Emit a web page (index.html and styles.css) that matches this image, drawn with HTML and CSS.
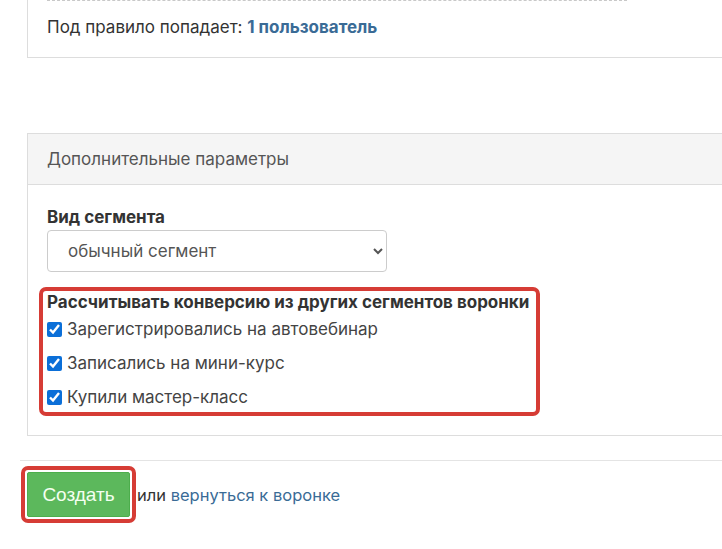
FILE: index.html
```
<!DOCTYPE html>
<html lang="ru">
<head>
<meta charset="utf-8">
<link rel="stylesheet" href="styles.css">
</head>
<body>
<div class="page">
  <div class="panel panel-top">
    <div class="dashed"></div>
    <p class="count">Под правило попадает: <a class="count-link" href="#">1 пользователь</a></p>
  </div>

  <div class="panel panel-extra">
    <div class="panel-heading">Дополнительные параметры</div>
    <div class="panel-body">
      <label class="field-label" for="kind">Вид сегмента</label>
      <select id="kind" class="select">
        <option>обычный сегмент</option>
      </select>
      <div class="highlight">
        <div class="group-title">Рассчитывать конверсию из других сегментов воронки</div>
        <label class="check"><input type="checkbox" checked> Зарегистрировались на автовебинар</label>
        <label class="check"><input type="checkbox" checked> Записались на мини-курс</label>
        <label class="check"><input type="checkbox" checked> Купили мастер-класс</label>
      </div>
    </div>
  </div>

  <div class="actions">
    <span class="btn-ring"><button class="btn-create" type="button">Создать</button></span>
    <span class="or">или <a class="back-link" href="#">вернуться к воронке</a></span>
  </div>
</div>
</body>
</html>
```
FILE: styles.css
```
html, body {
  margin: 0;
  padding: 0;
  background: #fff;
}
body {
  font-family: Inter, "Noto Sans", sans-serif;
  font-size: 17px;
  line-height: 22px;
  color: #333;
  overflow: hidden;
}
.page {
  padding-left: 20px;
}
.panel {
  margin-left: 7px;
  border: 1px solid #ddd;
  border-right: none;
  background: #fff;
}
.panel-top {
  border-top: none;
  padding: 0 19px 19px;
}
.dashed {
  width: 580px;
  border-top: 1px dashed #c8c8c8;
}
.count {
  margin: 15px 0 0;
}
.count-link {
  color: #3a6b96;
  font-weight: 700;
  text-decoration: none;
}
.panel-extra {
  margin-top: 75px;
}
.panel-heading {
  height: 50px;
  display: flex;
  align-items: center;
  padding-left: 19px;
  background: #f5f5f5;
  border-bottom: 1px solid #ddd;
  color: #555;
}
.panel-body {
  padding: 21px 19px 19px;
}
.field-label {
  display: block;
  font-weight: 700;
  color: #333;
}
.select {
  display: block;
  margin-top: 2px;
  width: 340px;
  height: 42px;
  padding: 0 12px 0 16px;
  border: 1px solid #ccc;
  border-radius: 4px;
  background: #fff;
  font-family: Inter, "Noto Sans", sans-serif;
  font-size: 17px;
  color: #555;
}
.highlight {
  margin: 15px 0 0 -8px;
  width: 489px;
  border: 4px solid #d63c35;
  border-radius: 7px;
  padding: 0 0 4px 4px;
}
.group-title {
  font-weight: 700;
  color: #333;
  white-space: nowrap;
}
.check {
  display: flex;
  align-items: center;
  height: 22px;
  margin-top: 12px;
  color: #444;
}
.group-title + .check {
  margin-top: 5px;
}
.check input {
  width: 15px;
  height: 15px;
  margin: 0 5px 0 0;
  accent-color: #0b6fd8;
}
.actions {
  margin-top: 24px;
  border-top: 1px solid #e4e4e4;
  padding-top: 5px;
  display: flex;
  align-items: center;
}
.btn-ring {
  margin-left: 1px;
  display: inline-flex;
  border: 4px solid #d63c35;
  border-radius: 7px;
  padding: 2px;
  background: #fff;
}
.btn-create {
  width: 103px;
  height: 45px;
  border: 1px solid #4cae4c;
  border-radius: 2px;
  background: #5cb85c;
  color: #f4fff0;
  font-family: "Liberation Sans", Arial, sans-serif;
  font-size: 19px;
  padding: 0;
}
.or {
  margin-left: 1px;
  color: #333;
  font-size: 16.5px;
}
.back-link {
  color: #3a6b96;
  text-decoration: none;
}
```
